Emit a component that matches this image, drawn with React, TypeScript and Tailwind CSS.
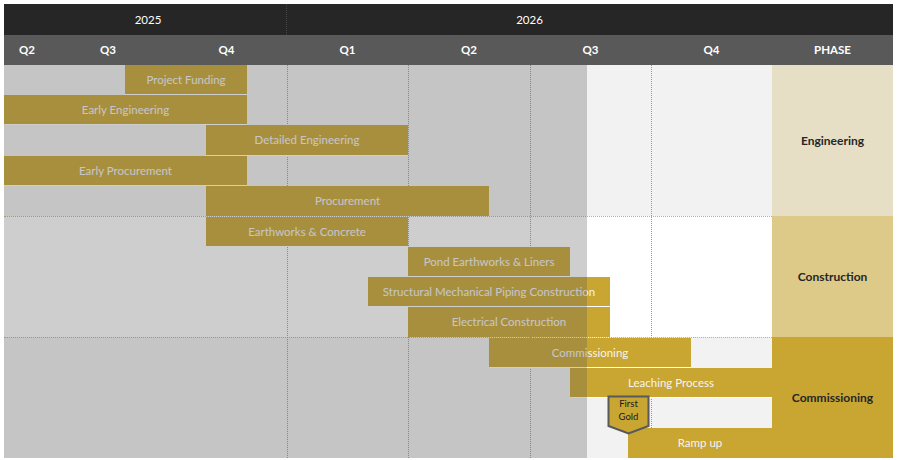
import React from 'react';

interface Task {
  name: string;
  start: number; // page x where bar begins
  end: number; // page x where bar ends
}

interface Band {
  phase: string;
  rowBg: string;
  phaseBg: string;
  height: string;
  divider: boolean;
  tasks: (Task | null)[];
}

const ORIGIN = 4;

const bands: Band[] = [
  {
    phase: 'Engineering',
    rowBg: 'bg-[#f2f2f2]',
    phaseBg: 'bg-[#e6dfc5]',
    height: 'h-[151px]',
    divider: false,
    tasks: [
      { name: 'Project Funding', start: 125, end: 247 },
      { name: 'Early Engineering', start: 4, end: 247 },
      { name: 'Detailed Engineering', start: 206, end: 408 },
      { name: 'Early Procurement', start: 4, end: 247 },
      { name: 'Procurement', start: 206, end: 489 },
    ],
  },
  {
    phase: 'Construction',
    rowBg: 'bg-white',
    phaseBg: 'bg-[#ddca89]',
    height: 'h-[121px]',
    divider: true,
    tasks: [
      { name: 'Earthworks & Concrete', start: 206, end: 408 },
      { name: 'Pond Earthworks & Liners', start: 408, end: 570 },
      { name: 'Structural Mechanical Piping Construction', start: 368, end: 610 },
      { name: 'Electrical Construction', start: 408, end: 610 },
    ],
  },
  {
    phase: 'Commissioning',
    rowBg: 'bg-[#f2f2f2]',
    phaseBg: 'bg-[#c9a532]',
    height: 'h-[121px]',
    divider: true,
    tasks: [
      { name: 'Commissioning', start: 489, end: 691 },
      { name: 'Leaching Process', start: 570, end: 772 },
      null,
      { name: 'Ramp up', start: 628, end: 772 },
    ],
  },
];

const quarters = [
  { label: 'Q2', w: 'w-[46px]' },
  { label: 'Q3', w: 'w-[116px]' },
  { label: 'Q4', w: 'w-[121px]' },
  { label: 'Q1', w: 'w-[121px]' },
  { label: 'Q2', w: 'w-[122px]' },
  { label: 'Q3', w: 'w-[121px]' },
  { label: 'Q4', w: 'w-[121px]' },
  { label: 'PHASE', w: 'w-[121px]' },
];

const gridLines = [287, 408, 530, 651];

const Bar: React.FC<{ task: Task; last: boolean }> = ({ task, last }) => (
  <div
    className={`relative z-[2] flex items-center justify-center bg-[#c9a532] text-[11.5px] text-[#f4f4f4] whitespace-nowrap ${last ? '' : 'border-b border-white'}`}
    style={{ marginLeft: task.start - ORIGIN, width: task.end - task.start }}
  >
    {task.name}
  </div>
);

const FirstGold: React.FC = () => (
  <div className="absolute left-[603px] top-[330px] z-[4] w-[43px] h-[40px]">
    <svg width="43" height="40" viewBox="0 0 43 40" className="absolute inset-0">
      <polygon points="1.5,1.5 41.5,1.5 41.5,31 21.5,38.5 1.5,31" fill="#c9a532" stroke="#595959" strokeWidth="2" />
    </svg>
    <div className="relative flex flex-col items-center pt-[3px] text-[9.5px] leading-[12.5px] text-[#1a1a1a]">
      <span>First</span>
      <span>Gold</span>
    </div>
  </div>
);

const App: React.FC = () => {
  return (
    <div className="w-[897px] h-[460px] bg-white pt-[4px] pl-[4px] font-['Lato',sans-serif]">
      <div className="w-[889px]">
        {/* year row */}
        <div className="flex h-[31px] bg-[#262626] text-[11.5px] text-white">
          <div className="w-[283px] flex items-center justify-center pl-[6px] border-r border-dotted border-[#454545]">2025</div>
          <div className="w-[485px] flex items-center justify-center">2026</div>
          <div className="w-[121px]" />
        </div>
        {/* quarter row */}
        <div className="flex h-[30px] bg-[#595959] text-[11.5px] font-bold text-white">
          {quarters.map((q, i) => (
            <div key={i} className={`${q.w} flex items-center justify-center`}>
              {q.label}
            </div>
          ))}
        </div>

        {/* body */}
        <div className="flex">
          <div className="relative w-[768px]">
            {bands.map((band) => (
              <div
                key={band.phase}
                className={`${band.height} ${band.rowBg} flex flex-col ${band.divider ? 'border-t border-dotted border-[#c9b36a]' : ''}`}
              >
                {band.tasks.map((t, i) => (
                  <div key={i} className="flex flex-1">
                    {t && <Bar task={t} last={i === band.tasks.length - 1} />}
                  </div>
                ))}
              </div>
            ))}

            {gridLines.map((x) => (
              <div
                key={x}
                className="absolute top-0 bottom-0 z-[1] border-l border-dotted border-[#9a9a9a]"
                style={{ left: x - ORIGIN }}
              />
            ))}

            {/* elapsed time shading */}
            <div className="absolute left-0 top-0 bottom-0 z-[3] w-[583px] bg-[#5e5e5e]/30" />

            <FirstGold />
          </div>

          <div className="w-[121px] flex flex-col text-[12px] font-bold text-[#262626]">
            {bands.map((band) => (
              <div
                key={band.phase}
                className={`${band.height} ${band.phaseBg} flex items-center justify-center`}
              >
                {band.phase}
              </div>
            ))}
          </div>
        </div>
      </div>
    </div>
  );
};

export default App;
